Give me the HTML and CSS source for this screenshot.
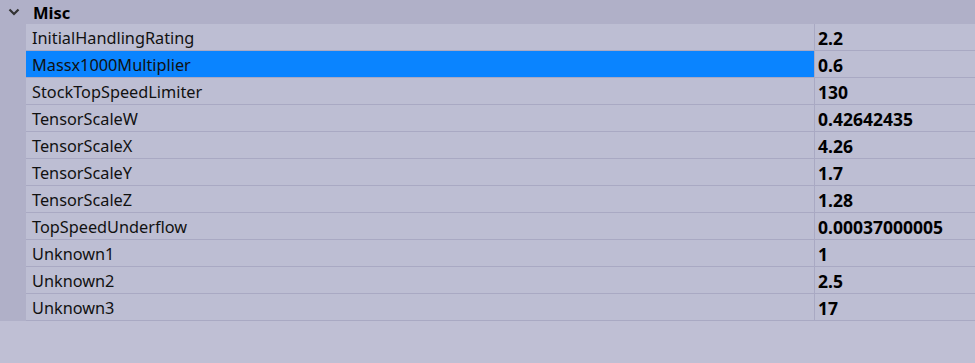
FILE: index.html
```html
<!DOCTYPE html>
<html lang="en">
<head>
    <meta charset="UTF-8">
    <title>Properties</title>
    <link rel="stylesheet" href="styles.css">
</head>
<body>
    <div class="grid">
        <div class="category">
            <span class="chevron">
                <svg width="12" height="8" viewBox="0 0 12 8"><path d="M1.5 1.5 L6 6 L10.5 1.5" fill="none" stroke="#333" stroke-width="2.2"/></svg>
            </span>
            <span class="cat-name">Misc</span>
        </div>
        <div class="rows">
            <div class="row"><div class="name">InitialHandlingRating</div><div class="value">2.2</div></div>
            <div class="row selected"><div class="name">Massx1000Multiplier</div><div class="value">0.6</div></div>
            <div class="row"><div class="name">StockTopSpeedLimiter</div><div class="value">130</div></div>
            <div class="row"><div class="name">TensorScaleW</div><div class="value">0.42642435</div></div>
            <div class="row"><div class="name">TensorScaleX</div><div class="value">4.26</div></div>
            <div class="row"><div class="name">TensorScaleY</div><div class="value">1.7</div></div>
            <div class="row"><div class="name">TensorScaleZ</div><div class="value">1.28</div></div>
            <div class="row"><div class="name">TopSpeedUnderflow</div><div class="value">0.00037000005</div></div>
            <div class="row"><div class="name">Unknown1</div><div class="value">1</div></div>
            <div class="row"><div class="name">Unknown2</div><div class="value">2.5</div></div>
            <div class="row"><div class="name">Unknown3</div><div class="value">17</div></div>
        </div>
    </div>
</body>
</html>
```

FILE: styles.css
```css
*{
    margin: 0;
    padding: 0;
    box-sizing: border-box;
}
body{
    width: 975px;
    height: 363px;
    overflow: hidden;
    background-color: #bfbfd4;
    font-family: "Noto Sans", "Open Sans", sans-serif;
    font-size: 16.3px;
    color: #111;
}
.category{
    display: flex;
    align-items: center;
    height: 24px;
    background-color: #b0b0c8;
}
.chevron{
    display: flex;
    width: 33px;
    padding-left: 8px;
}
.cat-name{
    font-weight: bold;
    font-size: 16.5px;
    color: #000;
}
.rows{
    border-left: 26px solid #b0b0c8;
}
.row{
    display: grid;
    grid-template-columns: 789px 1fr;
    height: 27px;
    border-bottom: 1px solid #a9a9c3;
    background-color: #bdbed3;
}
.name{
    display: flex;
    align-items: center;
    padding: 1px 0 0 6px;
    border-right: 1px solid #a9a9c3;
}
.value{
    display: flex;
    align-items: center;
    padding: 1px 0 0 3px;
    font-weight: bold;
    font-size: 17.5px;
    color: #000;
}
.selected .name{
    background-color: #0a84ff;
}
```
